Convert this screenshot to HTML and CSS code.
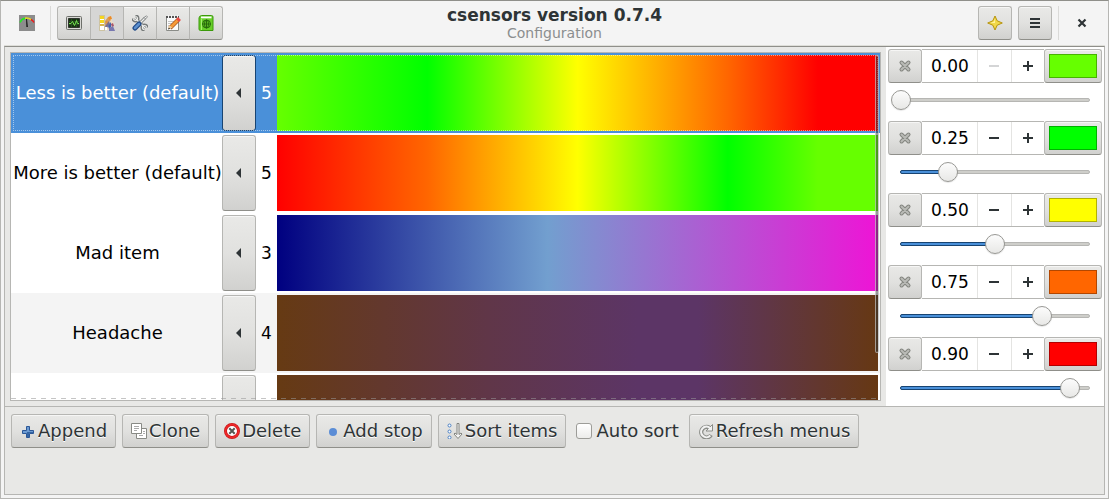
FILE: index.html
```
<!DOCTYPE html>
<html lang="en">
<head>
<meta charset="utf-8">
<title>csensors version 0.7.4</title>
<link rel="stylesheet" href="styles.css">
</head>
<body>
<div class="window">
  <header class="header">
    <div class="header-start">
      <svg class="icon" viewBox="0 0 16 16" aria-hidden="true"><path fill="#8c8c8c" d="M0 0h16v16H0z"/><g fill="none" stroke-width="1.500"><path stroke="#1df01d" d="M1 7.500Q2.500 4 6 3.300"/><path stroke="#e8dc20" d="M6 3.300Q9 2.600 12 4.500"/><path stroke="#f01818" d="M12 4.500Q14 5.500 15 7.500"/></g><path fill="#222" d="M7 4h1l1 8H7.300z"/></svg>
      <span class="separator"></span>
      <div class="linked">
        <button class="button square" aria-label="Monitor"><svg class="icon" viewBox="0 0 16 16"><rect x=".5" y="1.500" width="15" height="13" rx="1" fill="#d8d8d4" stroke="#6e706b"/><path fill="#173312" stroke="#30352e" d="M2.500 3.500h11v9h-11z"/><path stroke="#264d20" d="M3 6.500h10M3 9.500h10M5.500 4v8M10.500 4v8"/><path fill="none" stroke="#73e34f" d="M3 8.500h2l1.500-2 2 4 2-5 1 3H13"/></svg></button>
        <button class="button square active" aria-label="Colors"><svg class="icon" viewBox="0 0 16 16"><path fill="#fff" stroke="#b8a870" stroke-width=".6" d="M.5.5h5v15h-5z"/><path fill="#f5d61f" d="M1 1h4v3H1zM1 5h4v3H1z"/><path fill="#d9b24a" d="M1 9h4v2H1z"/><path fill="#ecdcc4" d="M6 5l4-4 3 2v3l2 2v7H6z"/><path fill="#d5a060" d="M6 6l3-4 3 3-6 6z"/><path fill="#ec8b25" d="M9 2l3-1 1 3-3 1zM7 6l2 1-1 2z"/><path fill="#7a6d8f" d="M6 11l4-5 1 3-4 5z"/><path fill="#3e64ae" d="M9 11l3-4v5l-2 2z"/><path fill="#a5546e" d="M12 9l2-1 1 3-2 1z"/><path fill="#7878b0" d="M10 13l4-2 2 5h-6z"/><path fill="#fff" d="M6 12h2v3H6z"/></svg></button>
        <button class="button square" aria-label="Preferences"><svg class="icon" viewBox="0 0 16 16"><g fill="none" stroke="#777b7a" stroke-width="3"><path d="M4 4l9 9"/><path d="M1 3.500A2.500 2.500 0 1 0 3.500 1"/><path d="M12.500 15A2.500 2.500 0 1 1 15 12.500"/></g><g fill="none" stroke="#ecedeb" stroke-width="1.200"><path d="M4 4l9 9"/><path d="M1.500 3.500A2 2 0 1 0 3.500 1.500"/><path d="M12.500 14.500A2 2 0 1 1 14.500 12.500"/></g><path stroke="#777b7a" stroke-width="3" d="M8 8l5-5"/><path stroke="#f0f0f0" stroke-width="1.200" d="M8 8l5-5"/><path fill="#f0f0f0" stroke="#777b7a" stroke-width=".8" d="M12 2.500L14.500.8l1 1L13.500 4z"/><path stroke="#204a87" stroke-width="5" stroke-linecap="round" d="M3 13l4-4"/><path stroke="#5b8fcd" stroke-width="2.500" stroke-linecap="round" d="M3 13l4-4"/></svg></button>
        <button class="button square" aria-label="Edit"><svg class="icon" viewBox="0 0 16 16"><path fill="#fafafa" stroke="#8a8c88" d="M1.500 2.500h12v13h-12z"/><path fill="#555" d="M1 1h13v2H1z"/><path stroke="#f4f4f4" d="M3.500 0v3M6.500 0v3M9.500 0v3M12.500 0v3"/><path stroke="#c4c4c4" d="M3 6.500h6M3 8.500h5M3 10.500h3"/><path stroke="#9d4a17" stroke-width="4.200" d="M5 13l8-8"/><path stroke="#f69a38" stroke-width="3" d="M6 12l7-7"/><path stroke="#e84a45" stroke-width="4" d="M12.500 5.500l2-2"/><path fill="#f0ce9b" d="M3 14l1.500-4 3 3z"/><path fill="#222" d="M3 14.500l.8-2 1.300 1.300z"/></svg></button>
        <button class="button square" aria-label="Book"><svg class="icon" viewBox="0 0 16 16"><path fill="#68cf28" stroke="#3b9a0a" d="M3.500.5h10q1.500 0 1.500 1.500v13.500H2.500q-1.500 0-1.500-1.500V3q0-2 2.500-2.500z"/><path fill="#fff" d="M3 1.500h10.500v1.800H3z"/><path stroke="#a5ee70" d="M3.500 4v11"/><g fill="none" stroke="#27690b"><circle cx="8.500" cy="9" r="4"/><path d="M4.500 9h8M8.500 5v8"/><ellipse cx="8.500" cy="9" rx="2" ry="4"/></g></svg></button>
      </div>
    </div>
    <div class="title"><h1>csensors version 0.7.4</h1><p>Configuration</p></div>
    <div class="header-end">
      <button class="button square" aria-label="New"><svg class="icon" viewBox="0 0 16 16"><path fill="#f1d84b" stroke="#b6930e" stroke-linejoin="round" d="M8 1l2.200 4.800L15.300 8l-5.100 2.200L8 15l-2.200-4.800L.7 8l5.100-2.200z"/><path fill="#fff3a0" d="M8 3.500v4.500H3.500L7 6.500z"/></svg></button>
      <button class="button square" aria-label="Menu"><svg class="icon" viewBox="0 0 16 16"><path fill="#2e3436" d="M3 3h10v2H3zM3 7h10v2H3zM3 11h10v2H3z"/></svg></button>
      <span class="separator"></span>
      <button class="close" aria-label="Close"><svg class="icon" viewBox="0 0 16 16"><path stroke="#2e3436" stroke-width="2.200" d="M4.500 4.500l7 7M11.500 4.500l-7 7"/></svg></button>
    </div>
  </header>
  <main class="content">
    <div class="panes">
      <section class="list-frame">
        <ul class="list">
          <li class="row selected"><span class="name">Less is better (default)</span><button class="button" aria-label="Expand"><svg class="arrow" viewBox="0 0 6 10"><path d="M5 0v10L0 5z"/></svg></button><span class="count">5</span><span class="gradient less"></span></li>
          <li class="row"><span class="name">More is better (default)</span><button class="button" aria-label="Expand"><svg class="arrow" viewBox="0 0 6 10"><path d="M5 0v10L0 5z"/></svg></button><span class="count">5</span><span class="gradient more"></span></li>
          <li class="row"><span class="name">Mad item</span><button class="button" aria-label="Expand"><svg class="arrow" viewBox="0 0 6 10"><path d="M5 0v10L0 5z"/></svg></button><span class="count">3</span><span class="gradient mad"></span></li>
          <li class="row hover"><span class="name">Headache</span><button class="button" aria-label="Expand"><svg class="arrow" viewBox="0 0 6 10"><path d="M5 0v10L0 5z"/></svg></button><span class="count">4</span><span class="gradient ache"></span></li>
          <li class="row"><span class="name"></span><button class="button" aria-label="Expand"><svg class="arrow" viewBox="0 0 6 10"><path d="M5 0v10L0 5z"/></svg></button><span class="count"></span><span class="gradient ache"></span></li>
        </ul>
        <span class="scrollbar"></span>
        <span class="undershoot"></span>
      </section>
      <section class="stops" id="stops"></section>
    </div>
    <footer class="toolbar">
      <button class="button"><svg class="icon" viewBox="0 0 16 16"><path fill="#6c9bd2" stroke="#2b5797" stroke-linejoin="round" d="M6.500 3.500h3v4h4v3h-4v4h-3v-4h-4v-3h4z"/><path fill="#3465a4" d="M7 9h6v1H9v4H7z"/></svg>Append</button>
      <button class="button"><svg class="icon" viewBox="0 0 16 16"><path fill="#fff" stroke="#888a85" d="M5.500 5.500h10v10h-10z"/><path stroke="#aaa" d="M12 8.500h2M12 10.500h2M8 12.500h4"/><path fill="#fff" stroke="#888a85" d="M.5.500h10v10H.5z"/><path stroke="#aaa" d="M3 3.500h5M3 5.500h5M3 7.500h3"/></svg>Clone</button>
      <button class="button"><svg class="icon" viewBox="0 0 16 16"><circle cx="8" cy="8" r="6.500" fill="#fff" stroke="#c8181c" stroke-width="3"/><circle cx="8" cy="8" r="6.500" fill="none" stroke="#ef2929" stroke-width="1.600"/><path stroke="#555753" stroke-width="2" d="M5.300 5.300l5.400 5.400M10.700 5.300l-5.400 5.400"/></svg>Delete</button>
      <button class="button"><svg class="icon" viewBox="0 0 16 16"><circle cx="8" cy="9" r="4" fill="#5b8dd6"/></svg>Add stop</button>
      <button class="button"><svg class="icon" viewBox="0 0 16 16"><g fill="#fff" stroke="#4a80c4"><circle cx="2.500" cy="2.500" r="1.500"/><circle cx="2.500" cy="8.500" r="1.500"/><circle cx="2.500" cy="14.500" r="1.500"/></g><path fill="#f5f5f5" stroke="#777974" stroke-width=".9" d="M10 .5h2v11l2-1.500 1 1-4 4.500-4-4.500 1-1 2 1.500z"/></svg>Sort items</button>
      <label class="check"><input type="checkbox"><span>Auto sort</span></label>
      <button class="button"><svg class="icon" viewBox="0 0 16 16"><path fill="none" stroke="#8b8d88" stroke-width="4.200" d="M13 12A5.300 5.300 0 1 1 11.500 4.800"/><path fill="#f2f2f2" stroke="#8b8d88" d="M14.500 1.500v6.500H8l2.500-2.500z"/><path fill="none" stroke="#f2f2f2" stroke-width="2.200" d="M12.300 12.600A5.300 5.300 0 1 1 12 5"/></svg>Refresh menus</button>
    </footer>
  </main>
</div>
<script src="app.js"></script>
</body>
</html>
```
FILE: styles.css
```
* { box-sizing: border-box; }
body { margin: 0; font: 17px/20px "DejaVu Sans", sans-serif; color: #2e3436; background: #f4f4f4; }
button, input { font: inherit; color: inherit; margin: 0; padding: 0; }
h1, p, ul { margin: 0; padding: 0; }

.window { height: 100vh; display: flex; flex-direction: column; padding: 0 3px 3px; border: 1px solid #b6b6b3; border-top-color: #8f8f8a; background: #f4f4f4; }
.header { display: grid; grid-template-columns: 1fr auto 1fr; padding: 4px 3px; border-bottom: 1px solid #deded9; }
.header-start, .header-end { display: flex; align-items: center; }
.header-start { padding-left: 12px; }
.header-start .separator { margin: 0 6px 0 15px; }
.header-end { justify-content: flex-end; gap: 6px; padding-right: 3px; }
.separator { width: 1px; height: 34px; background: #dadad8; }
.title { text-align: center; }
.title h1 { font-size: 17px; line-height: 20px; }
.title p { font-size: 14px; line-height: 16px; color: #8b8e8f; }

.icon { width: 16px; height: 16px; flex: none; display: block; }
.button { display: flex; align-items: center; justify-content: center; height: 34px; border: 1px solid #b6b6b3; border-bottom-color: #8f8f8a; border-radius: 3px; background: linear-gradient(#e9e9e7, #e1e1df 50%, #d1d1cf); box-shadow: inset 0 1px #f6f6f5; text-shadow: 0 1px #fff; }
.square { width: 34px; }
.linked { display: flex; }
.linked .button { border-radius: 0; }
.linked .button + .button { margin-left: -1px; }
.linked .button:first-child { border-radius: 3px 0 0 3px; }
.linked .button:last-child { border-radius: 0 3px 3px 0; }
.linked .active { background: #d6d6d5; box-shadow: none; }
.close { width: 34px; height: 34px; display: flex; align-items: center; justify-content: center; border: 0; background: none; }

.content { flex: 1; display: flex; flex-direction: column; border: 1px solid #b6b6b3; border-top-color: #8f8f8a; background: #e8e8e6; }
.panes { display: flex; border-bottom: 1px solid #b6b6b3; }
.list-frame { flex: 1; contain: size; position: relative; margin: 5px; border: 1px solid #b6b6b3; background: #fff; }
.list { height: 100%; overflow-y: auto; scrollbar-width: none; list-style: none; color: #000; }
.row { display: grid; grid-template-columns: 209px 34px 21px 1fr; height: 80px; padding: 2px; position: relative; }
.row .button { height: auto; }
.selected { background: #4a90d9; color: #fff; }
.selected .button { border-color: #184472; }
.selected::after { content: ""; position: absolute; inset: 2px; border: 1px dotted rgba(255,255,255,.5); pointer-events: none; }
.hover { background: #f4f4f4; }
.name, .count { align-self: center; text-align: center; white-space: nowrap; }
.name { font-size: 18px; }
.arrow { width: 6px; height: 10px; fill: #2e3436; }
.less { background: linear-gradient(90deg, #6f0 0, #0f0 25%, #ff0 50%, #f60 75%, #f00 90%); }
.more { background: linear-gradient(90deg, #f00 0, #f60 25%, #ff0 50%, #0f0 75%, #6f0 90%); }
.mad { background: linear-gradient(90deg, #000080 0, #729fcf 45%, #ee14d6); }
.ache { background: linear-gradient(90deg, #663a13 0, #603648 35%, #5c3566 60%, #5c3566 70%, #663813); }
.scrollbar { position: absolute; top: 2px; right: 1px; width: 4px; height: 298px; border: 1px solid rgba(255,255,255,.5); border-radius: 2px; background: rgba(46,52,54,.5); }
.undershoot { position: absolute; left: 0; right: 0; bottom: 1px; height: 1px; background: repeating-linear-gradient(90deg, rgba(150,150,150,.55) 0 5px, transparent 5px 10px); }

.stops { width: 218px; padding: 2px 2px 0; background: #fff; }
.stop { height: 72px; }
.stop:last-child { height: 69px; }
.controls { display: flex; }
.value { flex: 1; min-width: 0; display: flex; border: 1px solid #b6b6b3; border-width: 1px 0; }
.value input { width: 55px; padding: 0 0 0 9px; border: 0; background: #fff; color: #000; outline: 0; }
.value button { flex: 1; display: flex; align-items: center; justify-content: center; border: 0; border-left: 1px solid #e4e4e2; background: #fff; }
.value button:disabled .icon { opacity: .2; }
.color { width: 58px; }
.swatch { width: 48px; height: 24px; border: 1px solid rgba(0,0,0,.3); }
.scale { display: grid; align-items: center; padding: 7px 3px 0; }
.track, .scale input { grid-area: 1 / 1; }
.track { height: 4px; margin: 0 9px; border-radius: 2px; border: 1px solid #b6b6b3; background: #cececa; }
.fill { display: block; height: 4px; margin: -1px; border: 1px solid #184472; border-radius: 2px; background: #4a90d9; }
.scale input { appearance: none; width: 100%; height: 20px; background: none; z-index: 1; }
.scale input::-webkit-slider-thumb { appearance: none; width: 20px; height: 20px; border: 1px solid #989894; border-radius: 50%; background: linear-gradient(#fcfcfc, #e8e8e6); box-shadow: 0 1px 1px rgba(0,0,0,.1); }

.toolbar { display: flex; gap: 6px; padding: 7px 6px; }
.toolbar .button { gap: 2px; padding: 0 8px 0 8px; white-space: nowrap; font-size: 18px; }
.check { display: flex; align-items: center; gap: 4px; padding: 0 4px; font-size: 18px; white-space: nowrap; }
.check input { appearance: none; width: 16px; height: 16px; border: 1px solid #9c9c98; border-radius: 3px; background: linear-gradient(#fff, #ececea); }
```
FILE: app.js
```
const stops = [["0.00", "#66ff00"], ["0.25", "#00ff00"], ["0.50", "#ffff00"], ["0.75", "#ff6600"], ["0.90", "#ff0000"]];
document.getElementById("stops").innerHTML = stops.map(([value, color]) => `
  <div class="stop">
    <div class="controls">
      <button class="button square" aria-label="Remove stop"><svg class="icon" viewBox="0 0 16 16"><path stroke="#83857f" stroke-width="4" stroke-linecap="round" d="M4.500 4.500l7 7M11.500 4.500l-7 7"/><path stroke="#b9bab6" stroke-width="2" stroke-linecap="round" d="M4.500 4.500l7 7M11.500 4.500l-7 7"/></svg></button>
      <div class="value">
        <input type="text" value="${value}" aria-label="Position">
        <button aria-label="Decrease" ${value === "0.00" ? "disabled" : ""}><svg class="icon" viewBox="0 0 16 16"><path fill="#2e3436" d="M3 7h10v2H3z"/></svg></button>
        <button aria-label="Increase"><svg class="icon" viewBox="0 0 16 16"><path fill="#2e3436" d="M3 7h4V3h2v4h4v2H9v4H7V9H3z"/></svg></button>
      </div>
      <button class="button color" aria-label="Color"><span class="swatch" style="background-color:${color}"></span></button>
    </div>
    <div class="scale">
      <span class="track">${value > 0 ? `<span class="fill" style="width:${value * 100}%"></span>` : ""}</span>
      <input type="range" min="0" max="1" step="0.01" value="${value}" aria-label="Position">
    </div>
  </div>`).join("");
```
